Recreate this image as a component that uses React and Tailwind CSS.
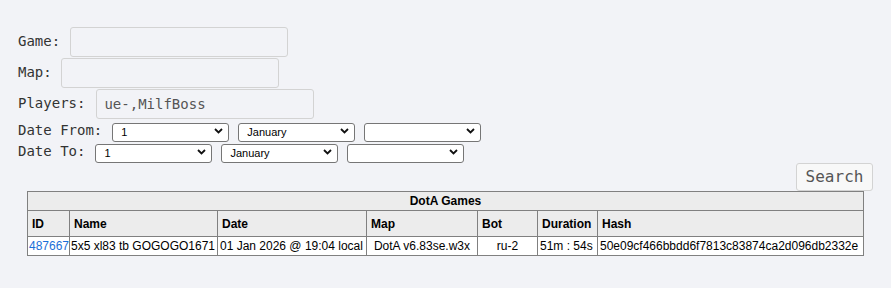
import React from "react";

const mono = { fontFamily: '"DejaVu Sans Mono", "Liberation Mono", monospace' };

function Chevron() {
  return (
    <svg className="pointer-events-none absolute right-[6px] top-1/2 -translate-y-1/2" width="9" height="6" viewBox="0 0 9 6">
      <path d="M1 1 L4.5 4.5 L8 1" fill="none" stroke="#111" strokeWidth="1.8" />
    </svg>
  );
}

function Sel({ value, options, w = "w-[117px]" }) {
  return (
    <div className={`relative ${w} h-[19px]`}>
      <select
        defaultValue={value}
        className="h-full w-full appearance-none rounded-[3px] border border-[#767676] bg-white pl-[8px] text-[11px] text-black outline-none"
        style={{ fontFamily: '"Liberation Sans", Arial, sans-serif' }}
      >
        {options.map((o) => (
          <option key={o} value={o}>{o}</option>
        ))}
      </select>
      <Chevron />
    </div>
  );
}

const days = Array.from({ length: 31 }, (_, i) => String(i + 1));
const months = ["January", "February", "March", "April", "May", "June", "July", "August", "September", "October", "November", "December"];

function DateRow({ label }) {
  return (
    <div className="flex h-[21px] items-center text-[14px] text-[#333]" style={mono}>
      <span className="mr-[10px] whitespace-pre">{label}</span>
      <div className="flex gap-[9px]">
        <Sel value="1" options={days} />
        <Sel value="January" options={months} />
        <Sel value="" options={[""]} />
      </div>
    </div>
  );
}

function TextRow({ label, value = "", gap }) {
  return (
    <div className="flex h-[31px] items-center text-[14px] text-[#333]" style={mono}>
      <span className={gap}>{label}</span>
      <input
        defaultValue={value}
        className="h-[30px] w-[218px] rounded-[3px] border border-[#d3d3d3] bg-[#f2f3f7] px-[7px] text-[14px] text-[#555] outline-none"
        style={mono}
      />
    </div>
  );
}

const cols = [
  { t: "ID", w: "w-[42px]" },
  { t: "Name", w: "w-[148px]" },
  { t: "Date", w: "w-[149px]" },
  { t: "Map", w: "w-[111px]" },
  { t: "Bot", w: "w-[60px]" },
  { t: "Duration", w: "w-[60px]" },
  { t: "Hash", w: "w-[266px]" },
];

const td = "whitespace-nowrap border border-[#808080] py-0 overflow-hidden";

export default function App() {
  return (
    <div className="min-h-[288px] w-[891px] bg-[#f2f3f7] pt-[26px]">
      <div className="pl-[18px]">
        <TextRow label="Game:" gap="mr-[10px]" />
        <TextRow label="Map:" gap="mr-[9px]" />
        <TextRow label="Players:" value="ue-,MilfBoss" gap="mr-[11px]" />
        <div className="h-[1px]" />
        <DateRow label="Date From:" />
        <DateRow label="Date To:" />
      </div>
      <div className="flex justify-end pr-[18px] pt-[1px]">
        <button
          className="h-[28px] w-[77px] rounded-[3px] border border-[#d3d3d3] bg-[#f8f8f8] text-[16px] text-[#555]"
          style={mono}
        >
          Search
        </button>
      </div>
      <div className="flex justify-center">
        <table
          className="w-[836px] table-fixed border-collapse border border-[#808080] text-[12px] text-black"
          style={{ fontFamily: '"Liberation Sans", Arial, sans-serif' }}
        >
          <colgroup>
            {cols.map((c) => (
              <col key={c.t} className={c.w} />
            ))}
          </colgroup>
          <thead>
            <tr>
              <th colSpan={7} className="h-[19px] border border-[#808080] bg-[#ececec] p-0 text-center font-bold">
                DotA Games
              </th>
            </tr>
            <tr>
              {cols.map((c) => (
                <th key={c.t} className="h-[26px] border border-[#808080] bg-[#ececec] px-[4px] py-0 text-left font-bold">
                  {c.t}
                </th>
              ))}
            </tr>
          </thead>
          <tbody>
            <tr className="bg-white">
              <td className={`${td} h-[19px] px-[1px]`}>
                <a href="#" className="text-[#1a6fd8]">487667</a>
              </td>
              <td className={`${td} px-[1px]`}>5x5 xl83 tb GOGOGO1671</td>
              <td className={`${td} px-[2px]`}>01 Jan 2026 @ 19:04 local</td>
              <td className={`${td} px-[1px] text-center`}>DotA v6.83se.w3x</td>
              <td className={`${td} px-[1px] text-center`}>ru-2</td>
              <td className={`${td} px-[2px]`}>51m : 54s</td>
              <td className={`${td} px-[2px]`}>50e09cf466bbdd6f7813c83874ca2d096db2332e</td>
            </tr>
          </tbody>
        </table>
      </div>
    </div>
  );
}
